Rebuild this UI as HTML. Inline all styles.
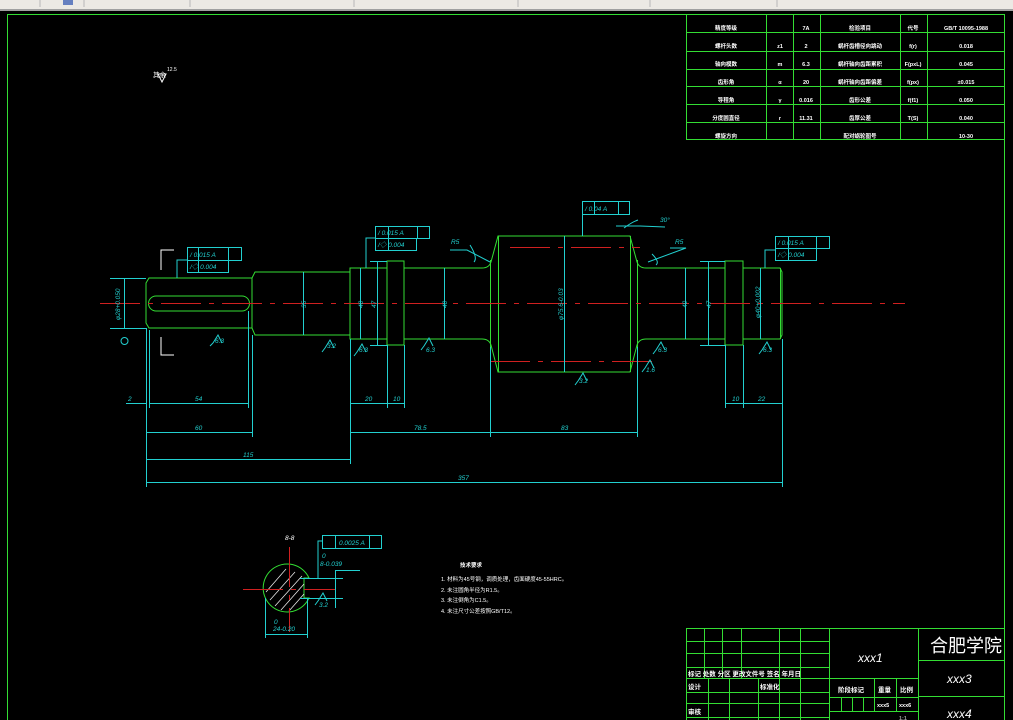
<!DOCTYPE html>
<html><head><meta charset="utf-8"><style>
html,body{margin:0;padding:0;background:#000;width:1013px;height:720px;overflow:hidden}
svg{display:block}
text{font-family:"Liberation Sans","Noto Sans CJK SC",sans-serif}
</style></head><body>
<svg width="1013" height="720" viewBox="0 0 1013 720" xmlns="http://www.w3.org/2000/svg">
<rect x="0" y="0" width="1013" height="10" fill="#ece9e4"/>
<rect x="0" y="9" width="1013" height="2" fill="#a0a0a0"/>
<g stroke="#b8b8b8" stroke-width="1"><line x1="40" y1="0" x2="40" y2="7"/><line x1="84" y1="0" x2="84" y2="7"/><line x1="190" y1="0" x2="190" y2="7"/><line x1="354" y1="0" x2="354" y2="7"/><line x1="518" y1="0" x2="518" y2="7"/><line x1="650" y1="0" x2="650" y2="7"/><line x1="777" y1="0" x2="777" y2="7"/></g>
<rect x="63" y="0" width="10" height="5" fill="#6680c0"/>

<g fill="none" stroke="#33dd33" stroke-width="1">
<rect x="7.5" y="14.5" width="997" height="720"/>
<rect x="686.5" y="14.5" width="318" height="125"/>
<line x1="686" y1="32.5" x2="1005" y2="32.5"/><line x1="686" y1="51.5" x2="1005" y2="51.5"/><line x1="686" y1="69.5" x2="1005" y2="69.5"/><line x1="686" y1="86.5" x2="1005" y2="86.5"/><line x1="686" y1="104.5" x2="1005" y2="104.5"/><line x1="686" y1="122.5" x2="1005" y2="122.5"/>
<line x1="766.5" y1="14" x2="766.5" y2="139"/><line x1="793.5" y1="14" x2="793.5" y2="139"/><line x1="820.5" y1="14" x2="820.5" y2="139"/><line x1="900.5" y1="14" x2="900.5" y2="139"/><line x1="927.5" y1="14" x2="927.5" y2="139"/>
<rect x="686.5" y="628.5" width="318" height="100"/>
<line x1="686" y1="641.5" x2="829" y2="641.5"/><line x1="686" y1="653.5" x2="829" y2="653.5"/><line x1="686" y1="667.5" x2="829" y2="667.5"/><line x1="686" y1="678.5" x2="829" y2="678.5"/><line x1="686" y1="692.5" x2="829" y2="692.5"/><line x1="686" y1="703.5" x2="829" y2="703.5"/><line x1="686" y1="717.5" x2="829" y2="717.5"/>
<line x1="704.5" y1="628" x2="704.5" y2="678"/><line x1="722.5" y1="628" x2="722.5" y2="678"/><line x1="741.5" y1="628" x2="741.5" y2="678"/><line x1="779.5" y1="628" x2="779.5" y2="720"/><line x1="800.5" y1="628" x2="800.5" y2="720"/>
<line x1="708.5" y1="678" x2="708.5" y2="720"/><line x1="729.5" y1="678" x2="729.5" y2="720"/><line x1="758.5" y1="678" x2="758.5" y2="720"/>
<line x1="829.5" y1="628" x2="829.5" y2="720"/><line x1="918.5" y1="628" x2="918.5" y2="720"/>
<line x1="829" y1="678.5" x2="918" y2="678.5"/><line x1="829" y1="697.5" x2="918" y2="697.5"/><line x1="829" y1="711.5" x2="918" y2="711.5"/>
<line x1="874.5" y1="678" x2="874.5" y2="711"/><line x1="896.5" y1="678" x2="896.5" y2="711"/>
<line x1="841.5" y1="697" x2="841.5" y2="711"/><line x1="852.5" y1="697" x2="852.5" y2="711"/><line x1="863.5" y1="697" x2="863.5" y2="711"/>
<line x1="918" y1="660.5" x2="1005" y2="660.5"/><line x1="918" y1="696.5" x2="1005" y2="696.5"/>
<path d="M146 283 L149 278 L252 278 L252 328 L149 328 L146 323 Z"/>
<path d="M156 296 L242 296 A7.5 7.5 0 0 1 242 311 L156 311 A7.5 7.5 0 0 1 156 296 Z"/>
<path d="M252 278 L255 272 L350 272 L350 335 L255 335 L252 328"/>
<rect x="350" y="268" width="37" height="71"/>
<rect x="387" y="261" width="17" height="84"/>
<path d="M404 268 L482 268 Q489 268 491 262 L498 236 L630 236 L637 262 Q639 268 646 268 L725 268"/>
<path d="M404 339 L482 339 Q489 339 491 345 L498 372 L630 372 L637 345 Q639 339 646 339 L725 339"/>
<line x1="490.5" y1="260" x2="490.5" y2="347"/><line x1="498.5" y1="236" x2="498.5" y2="372"/><line x1="630.5" y1="236" x2="630.5" y2="372"/><line x1="637.5" y1="260" x2="637.5" y2="347"/>
<rect x="725" y="261" width="18" height="84"/>
<path d="M743 268 L780 268 L782 272 L782 335 L780 339 L743 339"/>
<line x1="780.5" y1="268" x2="780.5" y2="339"/>
<path d="M309 578 A24 24 0 1 0 309 598 L304 598 L304 578 Z"/>
</g>
<g stroke="#fff" stroke-width="0.8" opacity="0.9">
<line x1="270" y1="600" x2="295" y2="572"/><line x1="275" y1="606" x2="302" y2="576"/><line x1="281" y1="610" x2="304" y2="584"/><line x1="266" y1="592" x2="286" y2="569"/><line x1="289" y1="611" x2="304" y2="594"/>
</g>
<g stroke="#d02020" stroke-width="1" stroke-dasharray="40 8 5 8">
<line x1="100" y1="303.5" x2="905" y2="303.5"/>
<line x1="510" y1="247.5" x2="640" y2="247.5"/><line x1="490" y1="361.5" x2="660" y2="361.5"/>
<line x1="243" y1="589.5" x2="335" y2="589.5"/><line x1="289.5" y1="547" x2="289.5" y2="632"/>
</g>
<g fill="none" stroke="#22d0d0" stroke-width="1">
<line x1="146.5" y1="328" x2="146.5" y2="487"/><line x1="252.5" y1="335" x2="252.5" y2="437"/><line x1="149.5" y1="330" x2="149.5" y2="408"/><line x1="248.5" y1="311" x2="248.5" y2="408"/>
<line x1="350.5" y1="339" x2="350.5" y2="464"/><line x1="404.5" y1="345" x2="404.5" y2="408"/><line x1="387.5" y1="345" x2="387.5" y2="408"/>
<line x1="490.5" y1="347" x2="490.5" y2="437"/><line x1="637.5" y1="347" x2="637.5" y2="437"/>
<line x1="725.5" y1="345" x2="725.5" y2="408"/><line x1="743.5" y1="345" x2="743.5" y2="408"/><line x1="782.5" y1="339" x2="782.5" y2="487"/>
<line x1="126" y1="403.5" x2="146" y2="403.5"/><line x1="149" y1="403.5" x2="248" y2="403.5"/><line x1="350" y1="403.5" x2="404" y2="403.5"/><line x1="725" y1="403.5" x2="782" y2="403.5"/>
<line x1="146" y1="432.5" x2="252" y2="432.5"/><line x1="350" y1="432.5" x2="637" y2="432.5"/>
<line x1="146" y1="459.5" x2="350" y2="459.5"/><line x1="146" y1="482.5" x2="782" y2="482.5"/>
<line x1="124.5" y1="278" x2="124.5" y2="328"/><line x1="110" y1="278.5" x2="146" y2="278.5"/><line x1="110" y1="328.5" x2="146" y2="328.5"/>
<line x1="303.5" y1="272" x2="303.5" y2="335"/><line x1="360.5" y1="268" x2="360.5" y2="339"/><line x1="377.5" y1="261" x2="377.5" y2="345"/><line x1="370" y1="261.5" x2="387" y2="261.5"/><line x1="370" y1="345.5" x2="387" y2="345.5"/>
<line x1="444.5" y1="268" x2="444.5" y2="339"/><line x1="564.5" y1="236" x2="564.5" y2="372"/>
<line x1="685.5" y1="268" x2="685.5" y2="339"/><line x1="708.5" y1="261" x2="708.5" y2="345"/><line x1="700" y1="261.5" x2="725" y2="261.5"/><line x1="700" y1="345.5" x2="725" y2="345.5"/><line x1="760.5" y1="268" x2="760.5" y2="339"/>
<rect x="187.5" y="247.5" width="54" height="13"/><rect x="187.5" y="260.5" width="41" height="12"/><line x1="198.5" y1="247" x2="198.5" y2="273"/><line x1="228.5" y1="247" x2="228.5" y2="261"/>
<path d="M187 260 L177 260 L177 278"/>
<rect x="375.5" y="226.5" width="54" height="12"/><rect x="375.5" y="238.5" width="41" height="12"/><line x1="388.5" y1="226" x2="388.5" y2="251"/><line x1="417.5" y1="226" x2="417.5" y2="239"/>
<path d="M375 238 L366 238 L366 268"/>
<rect x="582.5" y="201.5" width="47" height="13"/><line x1="594.5" y1="201" x2="594.5" y2="214"/><line x1="618.5" y1="201" x2="618.5" y2="214"/><line x1="582.5" y1="214" x2="582.5" y2="236"/>
<rect x="775.5" y="236.5" width="54" height="12"/><rect x="775.5" y="248.5" width="41" height="12"/><line x1="788.5" y1="236" x2="788.5" y2="261"/><line x1="816.5" y1="236" x2="816.5" y2="249"/>
<path d="M775 250 L765 250 L765 268"/>
<rect x="322.5" y="535.5" width="59" height="13"/><line x1="335.5" y1="535" x2="335.5" y2="549"/><line x1="369.5" y1="535" x2="369.5" y2="549"/>
<path d="M322 541 L318 541 L318 578"/>
<line x1="300" y1="578.5" x2="343" y2="578.5"/><line x1="300" y1="598.5" x2="343" y2="598.5"/><line x1="335.5" y1="570" x2="335.5" y2="608"/><line x1="335" y1="570.5" x2="360" y2="570.5"/>
<line x1="265.5" y1="598" x2="265.5" y2="638"/><line x1="307.5" y1="598" x2="307.5" y2="638"/><line x1="265" y1="634.5" x2="308" y2="634.5"/>
<path d="M213 343 L218 335 L222 343 M213 343 L210 346"/><path d="M325 348 L330 340 L334 348 M325 348 L322 352"/><path d="M357 352 L362 344 L366 352 M357 352 L354 356"/><path d="M424 346 L429 338 L433 346 M424 346 L421 350"/>
<path d="M578 381 L583 373 L587 381 M578 381 L575 385"/><path d="M656 350 L661 342 L665 350 M656 350 L653 354"/><path d="M645 368 L650 360 L654 368 M645 368 L642 372"/><path d="M762 350 L767 342 L771 350 M762 350 L759 354"/>
<path d="M318 601 L323 593 L327 601 M318 601 L315 605"/>
<path d="M450 250 L467 250 L490 262"/><path d="M470 245 Q478 258 474 262"/>
<path d="M670 248 L686 248 L648 262"/><path d="M652 254 Q660 262 656 265"/>
<path d="M616 226 L640 226 L665 227"/><path d="M624 228 Q632 222 638 220"/>
<circle cx="124.5" cy="341" r="3.5"/>
</g>
<g stroke="#fff" fill="none" stroke-width="1"><path d="M161 270 L161 250 L174 250"/><path d="M161 337 L161 355 L174 355"/><path d="M158 74 L162 82 L166 74 Z"/></g>
<g fill="#22d0d0" font-size="6.5" font-style="italic">
<text x="128" y="401">2</text><text x="195" y="401">54</text><text x="195" y="430">60</text><text x="243" y="457">115</text><text x="458" y="480">357</text>
<text x="365" y="401">20</text><text x="393" y="401">10</text><text x="414" y="430">78.5</text><text x="561" y="430">83</text>
<text x="732" y="401">10</text><text x="758" y="401">22</text>
<text x="190" y="257">/  0.015  A</text><text x="190" y="269">/◇  0.004</text>
<text x="378" y="235">/  0.015  A</text><text x="378" y="247">/◇  0.004</text>
<text x="585" y="211">/  0.04  A</text>
<text x="778" y="245">/  0.015  A</text><text x="778" y="257">/◇  0.004</text>
<text x="339" y="545">0.0025   A</text><text x="322" y="558">0</text><text x="320" y="566">8-0.039</text>
<text x="274" y="624">0</text><text x="273" y="631">24-0.20</text>
<text x="451" y="244">R5</text><text x="675" y="244">R5</text><text x="660" y="222">30°</text>
<text x="215" y="343">6.3</text><text x="327" y="348">3.2</text><text x="359" y="352">6.3</text><text x="426" y="352">6.3</text>
<text x="579" y="383">3.2</text><text x="658" y="352">6.3</text><text x="646" y="372">1.6</text><text x="763" y="352">6.3</text><text x="319" y="607">3.2</text>
<text transform="translate(306 308) rotate(-90)">35</text>
<text transform="translate(363 308) rotate(-90)">40</text>
<text transform="translate(376 308) rotate(-90)">47</text>
<text transform="translate(447 308) rotate(-90)">40</text>
<text transform="translate(563 320) rotate(-90)">φ75.6-0.03</text>
<text transform="translate(687 308) rotate(-90)">40</text>
<text transform="translate(711 308) rotate(-90)">47</text>
<text transform="translate(760 318) rotate(-90)">φ40+0.002</text>
<text transform="translate(120 320) rotate(-90)">φ28+0.050</text>
</g>
<g fill="#fff" font-size="6.5">
<text x="153" y="77">其余</text><text x="167" y="71" font-size="5">12.5</text>
<text x="285" y="540" font-style="italic">8-8</text>
<text x="460" y="567" font-size="5.5" font-weight="bold">技术要求</text>
<text x="441" y="581" font-size="5.5">1. 材料为45号钢，调质处理，齿面硬度45-55HRC。</text>
<text x="441" y="592" font-size="5.5">2. 未注圆角半径为R1.5。</text>
<text x="441" y="602" font-size="5.5">3. 未注倒角为C1.5。</text>
<text x="441" y="613" font-size="5.5">4. 未注尺寸公差按照GB/T12。</text>
</g>
<g fill="#fff" font-size="5.5" text-anchor="middle" font-weight="bold">
<text x="726" y="30">精度等级</text><text x="806" y="30">7A</text><text x="860" y="30">检验项目</text><text x="913" y="30">代号</text><text x="966" y="30">GB/T 10095-1988</text>
<text x="726" y="48">螺杆头数</text><text x="780" y="48">z1</text><text x="806" y="48">2</text><text x="860" y="48">蜗杆齿槽径向跳动</text><text x="913" y="48">f(r)</text><text x="966" y="48">0.018</text>
<text x="726" y="66">轴向模数</text><text x="780" y="66">m</text><text x="806" y="66">6.3</text><text x="860" y="66">蜗杆轴向齿距累积</text><text x="913" y="66">F(pxL)</text><text x="966" y="66">0.045</text>
<text x="726" y="84">齿形角</text><text x="780" y="84">α</text><text x="806" y="84">20</text><text x="860" y="84">蜗杆轴向齿距偏差</text><text x="913" y="84">f(px)</text><text x="966" y="84">±0.015</text>
<text x="726" y="102">导程角</text><text x="780" y="102">γ</text><text x="806" y="102">0.016</text><text x="860" y="102">齿形公差</text><text x="913" y="102">f(f1)</text><text x="966" y="102">0.050</text>
<text x="726" y="120">分度圆直径</text><text x="780" y="120">r</text><text x="806" y="120">11.31</text><text x="860" y="120">齿厚公差</text><text x="913" y="120">T(S)</text><text x="966" y="120">0.040</text>
<text x="726" y="138">螺旋方向</text><text x="860" y="138">配对蜗轮图号</text><text x="966" y="138">10-30</text>
</g>
<g fill="#fff" font-size="6.5" font-weight="bold">
<text x="688" y="676">标记 处数 分区 更改文件号 签名 年月日</text>
<text x="688" y="689">设计</text><text x="760" y="689">标准化</text>
<text x="688" y="714">审核</text><text x="838" y="692">阶段标记</text><text x="878" y="692">重量</text><text x="900" y="692">比例</text>
<text x="877" y="707" font-size="5.5">xxx5</text><text x="899" y="707" font-size="5.5">xxx6</text>
<text x="899" y="720" font-size="5.5" opacity="0.6">1:1</text>
</g>
<g fill="#fff" font-style="italic">
<text x="858" y="662" font-size="12">xxx1</text>
<text x="947" y="683" font-size="12">xxx3</text>
<text x="947" y="718" font-size="12">xxx4</text>
<text x="930" y="652" font-size="18" font-style="normal">合肥学院</text>
</g>
</svg>
</body></html>
